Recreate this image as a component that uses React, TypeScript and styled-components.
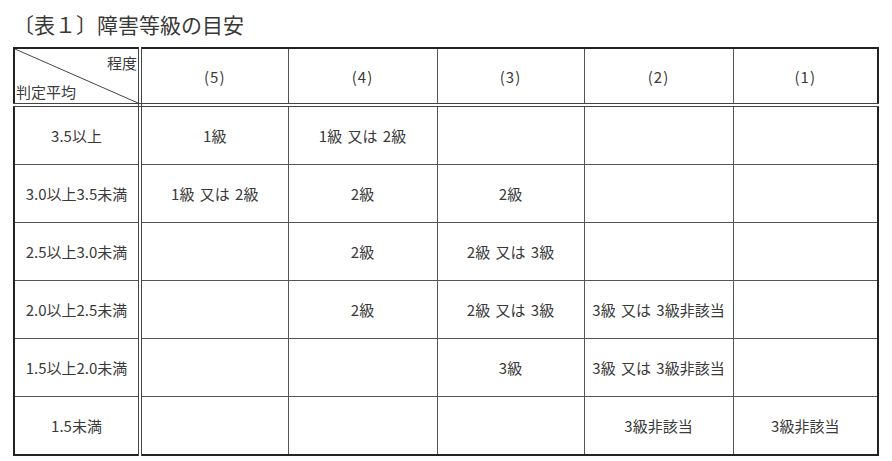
import React from 'react'
import styled, { createGlobalStyle } from 'styled-components'

const GlobalStyle = createGlobalStyle`
    html, body {
        margin: 0;
        padding: 0;
        background: #fff;
    }
    body {
        font-family: "Noto Sans CJK JP", "Liberation Serif", serif;
        color: #333;
    }
`

const levels = ['(5)', '(4)', '(3)', '(2)', '(1)']

const rows: { label: string; cells: string[] }[] = [
    { label: '3.5以上', cells: ['1級', '1級 又は 2級', '', '', ''] },
    { label: '3.0以上3.5未満', cells: ['1級 又は 2級', '2級', '2級', '', ''] },
    { label: '2.5以上3.0未満', cells: ['', '2級', '2級 又は 3級', '', ''] },
    { label: '2.0以上2.5未満', cells: ['', '2級', '2級 又は 3級', '3級 又は 3級非該当', ''] },
    { label: '1.5以上2.0未満', cells: ['', '', '3級', '3級 又は 3級非該当', ''] },
    { label: '1.5未満', cells: ['', '', '', '3級非該当', '3級非該当'] },
]

const colWidths = [126, 148, 149, 147, 149, 145]

export default function App() {
    return (
        <Page>
            <GlobalStyle />
            <Title>〔表１〕障害等級の目安</Title>
            <Table>
                <colgroup>
                    {colWidths.map((w, i) => (
                        <col key={i} style={{ width: w }} />
                    ))}
                </colgroup>
                <thead>
                    <tr>
                        <CornerCell>
                            <Diagonal viewBox="0 0 100 100" preserveAspectRatio="none">
                                <line x1="0" y1="0" x2="100" y2="100" stroke="#444" strokeWidth="1" vectorEffect="non-scaling-stroke" />
                            </Diagonal>
                            <CornerTop>程度</CornerTop>
                            <CornerBottom>判定平均</CornerBottom>
                        </CornerCell>
                        {levels.map((l) => (
                            <HeadCell key={l}>{l}</HeadCell>
                        ))}
                    </tr>
                </thead>
                <tbody>
                    {rows.map((r) => (
                        <tr key={r.label}>
                            <RowLabel>{r.label}</RowLabel>
                            {r.cells.map((c, i) => (
                                <Cell key={i}>{c}</Cell>
                            ))}
                        </tr>
                    ))}
                </tbody>
            </Table>
        </Page>
    )
}

const Page = styled.div`
    width: 892px;
    height: 461px;
    padding: 11px 0 0 13px;
    box-sizing: border-box;
`

const Title = styled.h1`
    margin: 0 0 10px 0;
    font-family: "Noto Sans CJK JP", serif;
    font-weight: 400;
    font-size: 21px;
    line-height: 26px;
    color: #383838;
`

const Table = styled.table`
    width: 864px;
    table-layout: fixed;
    border-collapse: collapse;
    border: 2px solid #222;
`

const BaseCell = styled.td`
    border: 1px solid #555;
    height: 57px;
    padding: 0;
    text-align: center;
    vertical-align: middle;
    font-size: 15px;
    color: #3a3a3a;
    white-space: nowrap;
    word-spacing: 2px;
`

const HeadCell = styled(BaseCell).attrs({ as: 'th' })`
    font-weight: 400;
    height: 54px;
    letter-spacing: 1px;
    border-bottom: 4px double #444;
`

const CornerCell = styled(HeadCell)`
    position: relative;
    letter-spacing: 0;
    border-right: 4px double #444;
`

const Diagonal = styled.svg`
    position: absolute;
    inset: 0;
    width: 100%;
    height: 100%;
`

const CornerTop = styled.span`
    position: absolute;
    top: 4px;
    right: 1px;
    line-height: 20px;
`

const CornerBottom = styled.span`
    position: absolute;
    bottom: 1px;
    left: 1px;
    line-height: 20px;
`

const RowLabel = styled(BaseCell)`
    border-right: 4px double #444;
`

const Cell = styled(BaseCell)``
